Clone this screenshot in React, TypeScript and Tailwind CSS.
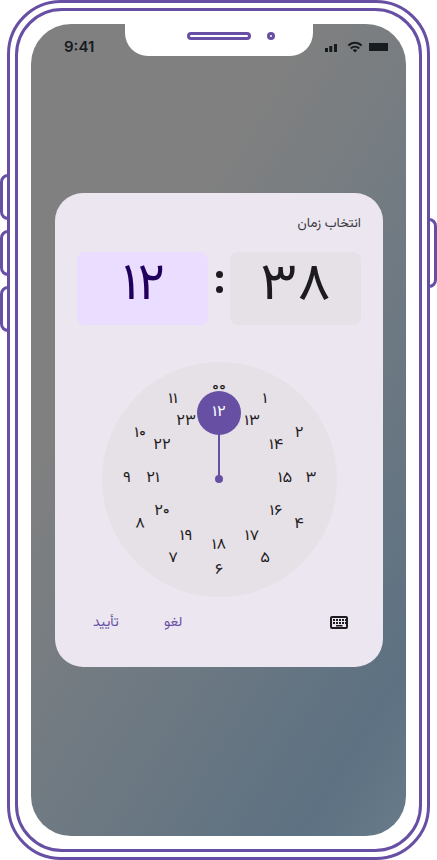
import React from "react";

const outerRing: [string, number, number][] = [
  ["۰۰", 219, 386], ["۱", 265, 398], ["۲", 298.5, 432], ["۳", 310.5, 477],
  ["۴", 298.5, 523], ["۵", 265, 557], ["۶", 219, 569], ["۷", 173, 557],
  ["۸", 139.5, 523], ["۹", 127, 477], ["۱۰", 139.5, 432], ["۱۱", 173, 398],
];
const innerRing: [string, number, number][] = [
  ["۱۳", 252, 420], ["۱۴", 276, 444], ["۱۵", 285, 477], ["۱۶", 276, 510],
  ["۱۷", 252, 535], ["۱۸", 219, 543.5], ["۱۹", 186, 535], ["۲۰", 162, 510],
  ["۲۱", 153, 477], ["۲۲", 162, 444], ["۲۳", 186, 420],
];

function Dial() {
  return (
    <div className="relative mx-auto mt-[37px] size-[235px] shrink-0 rounded-full bg-[#e5e1e7]" dir="ltr">
      <div className="absolute left-[95px] top-[29px] size-11 rounded-full bg-[#6750a4]" />
      <div className="absolute left-[116px] top-[70px] h-12 w-[2px] bg-[#6750a4]" />
      <div className="absolute left-[113px] top-[113px] size-2 rounded-full bg-[#6750a4]" />
      {[...outerRing, ...innerRing].map(([n, x, y]) => (
        <span
          key={n}
          className="absolute -translate-x-1/2 -translate-y-1/2 scale-x-[1.1] text-[15px] leading-none tracking-[1.800px] text-[#1d1b20]"
          style={{ left: x - 101.2, top: y - 361 }}
        >
          {n}
        </span>
      ))}
      <span className="absolute left-[117.500px] top-[50px] -translate-x-1/2 -translate-y-1/2 scale-x-[1.1] text-[15px] leading-none tracking-[1.800px] text-white">۱۲</span>
    </div>
  );
}

function StatusBar() {
  return (
    <div className="flex h-8 items-start justify-between pl-[33px] pr-[18px] pt-[14px] text-[#161b1f]">
      <span className="font-['Inter',sans-serif] text-[15px] font-semibold leading-[18px]">9:41</span>
      <svg className="mt-[3px]" width="64" height="12" viewBox="324 41 64 12" fill="currentColor">
        <path d="M325 48h3v4h-3zM329.300 46h3v6h-3zM334 44h3v8h-3zM369 43h19v8h-19z" />
        <g fill="none" stroke="currentColor" strokeWidth="1.900">
          <path d="M348.400 45.700C352 41.800 358 41.800 361.600 45.700M350.800 48.500C353 46 357 46 359.200 48.500" />
        </g>
        <path d="M352.600 50.100Q355 48.200 357.400 50.100L355 52.500Z" />
      </svg>
    </div>
  );
}

function Dialog() {
  return (
    <section dir="rtl" className="absolute left-6 top-[169px] flex h-[473.500px] w-[328px] flex-col rounded-[28px] bg-[#ece6f0] px-[22px]">
      <h1 className="mt-5 h-[21px] text-[13.500px] leading-[22px] text-[#3b3840]">انتخاب زمان</h1>
      <div className="mt-[18px] flex h-[73px] shrink-0 items-center" dir="ltr">
        <div className="flex h-full w-[131px] items-center justify-center rounded-lg bg-[#eaddff] text-[#21005d]">
          <span className="-translate-y-[2px] translate-x-px text-[52px] leading-none tracking-[2px]">۱۲</span>
        </div>
        <div className="flex w-[22px] -translate-y-[7px] flex-col items-center gap-2">
          <i className="size-[7px] rounded-full bg-[#1d1b20]" />
          <i className="size-[7px] rounded-full bg-[#1d1b20]" />
        </div>
        <div className="flex h-full w-[131px] items-center justify-center rounded-lg bg-[#e5e1e7] text-[#1d1b20]">
          <span className="-translate-y-[2px] scale-x-[1.09] text-[52px] leading-none tracking-[7px]">۳۸</span>
        </div>
      </div>
      <Dial />
      <div dir="ltr" className="mt-[15px] flex h-5 items-center pl-4 pr-[13px] text-[14px] leading-5 text-[#6750a4]">
        <button className="w-[27px] translate-y-px text-left">تأیید</button>
        <button className="ml-[44px] translate-y-px">لغو</button>
        <svg className="ml-auto translate-y-px" width="18" height="14" viewBox="0 0 18 14" fill="#1d1b20">
          <path fillRule="evenodd" d="M2 0h14q2 0 2 2v9q0 2-2 2H2q-2 0-2-2V2Q0 0 2 0Zm0 2v9h14V2ZM3 3h2v2H3zm3 0h2v2H6zm3 0h2v2H9zm3 0h2v2h-2zm3 0h1v2h-1zM3 6h2v2H3zm3 0h2v2H6zm3 0h2v2H9zm3 0h2v2h-2zm3 0h1v2h-1zM6 9h6.500v1.500H6z" />
        </svg>
      </div>
    </section>
  );
}

export default function App() {
  return (
    <div className="relative h-[860px] w-[437px] overflow-hidden bg-white font-['Vazirmatn','DejaVu_Sans',sans-serif]">
      <div className="absolute left-0 top-[174px] h-[46px] w-4 rounded-[8px] border-3 border-[#6750a4]" />
      <div className="absolute left-0 top-[230px] h-[46px] w-4 rounded-[8px] border-3 border-[#6750a4]" />
      <div className="absolute left-0 top-[286px] h-[46px] w-4 rounded-[8px] border-3 border-[#6750a4]" />
      <div className="absolute right-0 top-[218px] h-[70px] w-4 rounded-[8px] border-3 border-[#6750a4]" />
      <div className="relative ml-[7px] h-[860px] w-[423px] rounded-[54px] border-3 border-[#6750a4] bg-white p-[5px]">
        <div className="h-full rounded-[47px] border-3 border-[#6750a4] p-[13px]">
          <main className="relative h-[812px] w-[375px] rounded-[40px] bg-[linear-gradient(122deg,#808080_0%,#808080_31%,#727b82_54%,#5d7182_88%,#677b8a_100%)]">
            <div className="absolute left-[94px] top-[-1px] flex h-[33px] w-[187.500px] items-start rounded-b-[23px] bg-white pl-[62px] pt-[9px]">
              <div className="h-2 w-16 rounded-full border-3 border-[#6750a4]" />
              <div className="ml-4 size-2 rounded-full border-3 border-[#6750a4]" />
            </div>
            <StatusBar />
            <Dialog />
          </main>
        </div>
      </div>
    </div>
  );
}
